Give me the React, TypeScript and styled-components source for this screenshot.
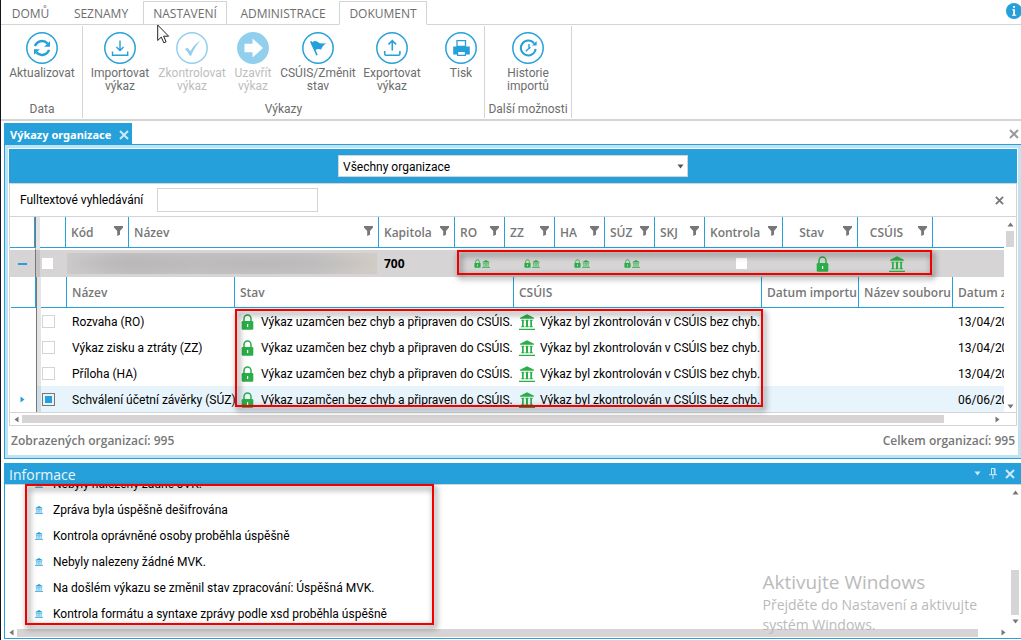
import React from "react";
import styled, { createGlobalStyle, css } from "styled-components";

const blue = "#26a0da";
const paleBlue = "#bfe3f3";
const line = "#d4d4d4";
const grey = "#777777";
const rowGrey = "#d6d4d5";
const green = "#2bae48";
const humanist = `"Open Sans", "Noto Sans", sans-serif`;

const GlobalStyle = createGlobalStyle`
  *, *::before, *::after { box-sizing: border-box; }
  body {
    margin: 0;
    background: #fff;
    color: #000;
    font-family: Roboto, "Open Sans", sans-serif;
    font-size: 12px;
    line-height: 16px;
    overflow: hidden;
  }
  button, input, select { font: inherit; color: inherit; margin: 0; }
  button { border: 0; padding: 0; background: none; cursor: pointer; }
  ul { list-style: none; margin: 0; padding: 0; }
  svg { display: block; flex: none; }
`;

/* ---------- shell ---------- */

const Shell = styled.div`
  position: relative;
  display: flex;
  flex-direction: column;
  height: 100vh;
  border-left: 1px solid #14141c;
  padding-bottom: 1px;
`;

const Workspace = styled.main`
  flex: 1;
  min-height: 0;
  display: flex;
  flex-direction: column;
  gap: 4px;
  padding-left: 3px;
`;

/* ---------- ribbon ---------- */

const Ribbon = styled.header`
  border-bottom: 2px solid ${line};
  color: #6d6d6d;
`;

const TabBar = styled.nav`
  display: flex;
  height: 25px;
  padding: 1px 0 0 1px;
  box-shadow: inset 0 -1px ${line};
`;

const RibbonTab = styled.button<{ $w: number; $state?: "hover" | "active" }>`
  width: ${(p) => p.$w}px;
  padding: 2px 0 0;
  border: 1px solid transparent;
  border-bottom-color: ${line};
  font-family: ${humanist};
  ${(p) => p.$state && css`border-color: ${line};`}
  ${(p) => p.$state === "active" && css`border-bottom-color: #fff;`}
`;

const InfoButton = styled.button`
  margin: 2px 0 0 auto;
  align-self: flex-start;
  width: 15px;
  overflow: hidden;
`;

const Groups = styled.div`
  display: flex;
  height: 94px;
  padding: 1px 0 1px 1px;
`;

const Group = styled.section<{ $w: number }>`
  display: flex;
  flex-direction: column;
  justify-content: space-between;
  width: ${(p) => p.$w}px;
  border-right: 1px solid ${line};
  padding: 6px 1px 1px;
`;

const GroupTools = styled.div`
  display: flex;
  justify-content: center;
`;

const GroupName = styled.h2`
  margin: 0;
  font-size: 12px;
  font-weight: 400;
  text-align: center;
  white-space: nowrap;
`;

const Tool = styled.button<{ $w: number; $end?: boolean }>`
  display: flex;
  flex-direction: column;
  align-items: center;
  gap: 3px;
  width: ${(p) => p.$w}px;
  line-height: 13px;
  white-space: pre;
  ${(p) => p.$end && css`margin-left: auto;`}
  &:disabled { color: #bdbdbd; }
  &:disabled svg { opacity: 0.5; }
`;

/* ---------- document panel ---------- */

const DocPanel = styled.section`
  flex: 1;
  min-height: 0;
  display: flex;
  flex-direction: column;
`;

const DocTabs = styled.div`
  display: flex;
  justify-content: space-between;
  align-items: center;
  padding: 2px 2px 0 0;
  color: #9a9a9a;
`;

const DocTab = styled.div`
  display: flex;
  align-items: center;
  gap: 8px;
  height: 21px;
  padding: 2px 3px 0 6px;
  background: ${blue};
  color: #fff;
  font-family: "Noto Sans", sans-serif;
  font-size: 11px;
  font-weight: 700;
  button { color: #cdeaf7; }
`;

const DocFrame = styled.div`
  flex: 1;
  min-height: 0;
  display: flex;
  flex-direction: column;
  border: 1px solid ${blue};
  border-right: 0;
`;

const DocInset = styled.div`
  flex: 1;
  min-height: 0;
  display: flex;
  flex-direction: column;
  border: 3px solid ${paleBlue};
  padding: 1px 1px 0;
`;

const Banner = styled.div`
  display: flex;
  justify-content: center;
  padding: 6px 0;
  background: ${blue};
`;

const Picker = styled.label`
  position: relative;
  width: 350px;
  color: #555;
  svg { position: absolute; right: 4px; top: 8px; pointer-events: none; }
`;

const PickerSelect = styled.select`
  display: block;
  appearance: none;
  width: 100%;
  height: 22px;
  padding: 1px 4px 0;
  border: 1px solid ${line};
  border-radius: 0;
  background: #fff;
  color: #000;
  outline: 0;
`;

const GridFrame = styled.div`
  position: relative;
  flex: 1;
  min-height: 0;
  display: flex;
  flex-direction: column;
  border: 1px solid ${line};
`;

const SearchRow = styled.div`
  display: flex;
  align-items: center;
  gap: 13px;
  padding: 4px 12px 4px 10px;
  border-bottom: 1px solid ${line};
  label { width: 124px; white-space: nowrap; }
  button { margin-left: auto; color: ${grey}; }
`;

const SearchInput = styled.input`
  width: 161px;
  height: 24px;
  border: 1px solid ${line};
  outline: 0;
`;

const GridBody = styled.div`
  flex: 1;
  min-height: 0;
  display: flex;
`;

const Viewport = styled.div`
  flex: 1;
  min-width: 0;
  overflow: hidden;
`;

const DataTable = styled.table<{ $inset?: boolean }>`
  table-layout: fixed;
  border-spacing: 0;
  width: ${(p) => (p.$inset ? "calc(100% - 1px)" : "100%")};
  margin-left: ${(p) => (p.$inset ? 1 : 0)}px;
  th, td { padding: 0; white-space: nowrap; overflow: hidden; }
  strong { font-family: ${humanist}; }
`;

const Th = styled.th`
  height: 31px;
  border-right: 1px solid ${blue};
  border-bottom: 1px solid ${blue};
  color: ${grey};
  font-family: ${humanist};
  font-weight: 600;
  text-align: left;
  &:last-child { border-right: 0; }
`;

const ThInner = styled.div<{ $center?: boolean }>`
  display: flex;
  align-items: center;
  padding: 0 5px;
  span {
    flex: 1;
    padding-top: 2px;
    ${(p) => p.$center && css`text-align: center; padding-right: 8px;`}
  }
  button { margin-bottom: 2px; }
`;

const GutterTh = styled.th`
  border-left: 1px solid ${grey};
  background: #e4e4e4;
`;

const GutterTd = styled.td`
  border-left: 1px solid ${grey};
  background: #e4e4e4;
`;

const OrgRow = styled.tr`
  td {
    height: 29px;
    border-top: 2px solid #fff;
    background: ${rowGrey};
  }
  ${GutterTd} { background: #c4c2c3; border-top-color: #e4e4e4; }
`;

const DetailRow = styled.tr<{ $selected?: boolean }>`
  td { height: 26px; padding-top: 1px; }
  ${(p) => p.$selected && css`
    td { background: #e8f4fb; }
    ${GutterTd} { background: #cfdde4; }
    td:first-child { background: #fff; }
  `}
`;

const Cell = styled.div<{ $pad?: number; $gap?: number; $center?: boolean }>`
  display: flex;
  align-items: center;
  gap: ${(p) => p.$gap ?? 0}px;
  padding-left: ${(p) => p.$pad ?? 5}px;
  ${(p) => p.$center && css`justify-content: center;`}
`;

const Marker = styled(Cell)`
  color: ${blue};
`;

const Redacted = styled.div`
  height: 21px;
  margin: 0 2px 0 1px;
  background:
    radial-gradient(ellipse 70px 12px at 22% 50%, #b9b7b8, transparent),
    radial-gradient(ellipse 120px 12px at 62% 50%, #bab8b9, transparent),
    linear-gradient(90deg, #cbc9ca, #c1bfc0 20%, #c4c2c3 80%, #d2ccc6);
`;

const Check = styled.input<{ $bare?: boolean }>`
  appearance: none;
  display: grid;
  width: ${(p) => (p.$bare ? 11 : 13)}px;
  height: ${(p) => (p.$bare ? 11 : 13)}px;
  margin: 0;
  background: #fff;
  border: ${(p) => (p.$bare ? "0" : `1px solid ${line}`)};
  &:checked {
    border-color: ${grey};
    background: ${blue} content-box;
    padding: 2px;
  }
`;

const Footer = styled.footer`
  display: flex;
  justify-content: space-between;
  height: 29px;
  padding: 7px 2px 0;
  color: ${grey};
  font-family: ${humanist};
  font-weight: 600;
`;

/* ---------- scroll bars ---------- */

const VBar = styled.div`
  display: flex;
  flex-direction: column;
  align-items: center;
  justify-content: space-between;
  width: 12px;
  padding: 4px 0 2px;
  color: ${grey};
`;

const VTrack = styled.div<{ $end?: boolean }>`
  flex: 1;
  display: flex;
  flex-direction: column;
  justify-content: ${(p) => (p.$end ? "flex-end" : "flex-start")};
  padding: 3px 0;
`;

const VThumb = styled.div<{ $h: number }>`
  width: 8px;
  height: ${(p) => p.$h}px;
  background: ${rowGrey};
`;

const HBar = styled.div<{ $ruled?: boolean }>`
  display: flex;
  align-items: center;
  gap: 2px;
  height: ${(p) => (p.$ruled ? 13 : 11)}px;
  padding: 0 ${(p) => (p.$ruled ? 15 : 14)}px 0 3px;
  color: ${grey};
  ${(p) => p.$ruled && css`border-top: 1px solid ${line};`}
`;

const HTrack = styled.div`
  flex: 1;
`;

const HThumb = styled.div<{ $share: number }>`
  width: ${(p) => p.$share}%;
  height: 8px;
  background: ${rowGrey};
`;

/* ---------- information panel ---------- */

const InfoPanel = styled.section`
  position: relative;
  display: flex;
  flex-direction: column;
`;

const InfoHead = styled.div`
  display: flex;
  align-items: center;
  gap: 8px;
  height: 21px;
  padding: 0 6px 0 5px;
  background: ${blue};
  color: #cdeaf7;
`;

const InfoTitle = styled.h2`
  flex: 1;
  margin: 0;
  padding-top: 2px;
  color: #eaf7fd;
  font-family: ${humanist};
  font-size: 14px;
  line-height: 20px;
  font-weight: 400;
`;

const InfoBody = styled.div`
  border: solid ${blue};
  border-width: 0 0 1px 1px;
  box-shadow: inset 0 1px ${line};
  padding-top: 1px;
`;

const InfoScroll = styled.div`
  display: flex;
  height: 142px;
`;

const Messages = styled.ul`
  flex: 1;
  display: flex;
  flex-direction: column;
  justify-content: flex-end;
  overflow: hidden;
`;

const Message = styled.li`
  display: flex;
  flex: none;
  align-items: center;
  gap: 10px;
  height: 26px;
  padding-left: 30px;
`;

/* ---------- overlays ---------- */

const Mark = styled.div<{ $x: number; $y: number; $w: number; $h: number }>`
  position: absolute;
  left: ${(p) => p.$x}px;
  top: ${(p) => p.$y}px;
  width: ${(p) => p.$w}px;
  height: ${(p) => p.$h}px;
  border: 2px solid #f20000;
  filter: drop-shadow(2px 3px 3px rgba(0, 0, 0, 0.7));
  pointer-events: none;
`;

const Watermark = styled.div`
  position: absolute;
  right: 44px;
  bottom: 5px;
  color: #bababa;
  font-family: ${humanist};
  font-size: 14px;
  line-height: 20px;
  pointer-events: none;
`;

const WatermarkTitle = styled.div`
  font-size: 19px;
  line-height: 26px;
`;

const Pointer = styled.svg`
  position: absolute;
  left: 156px;
  top: 24px;
  pointer-events: none;
`;

/* ---------- drawings ---------- */

const Ring = ({ children, solid }: { children: React.ReactNode; solid?: boolean }) => (
  <svg width="32" height="32" viewBox="0 0 32 32" fill="none" stroke={blue}>
    <circle cx="16" cy="16" r="15.2" strokeWidth="1.5" fill={solid ? blue : "none"} />
    {children}
  </svg>
);

const RefreshIcon = () => (
  <Ring>
    <path d="M9 14.2a7.4 7.4 0 0 1 12.6-2.6M23 17.8a7.4 7.4 0 0 1-12.6 2.6" strokeWidth="2.4" />
    <path d="M24 9.200v5.600h-5.800zM8 22.800v-5.600h5.800z" fill={blue} stroke="none" />
  </Ring>
);

const ImportIcon = () => (
  <Ring>
    <path d="M16 8.5v10M12.4 15l3.6 3.6 3.6-3.6M8.5 19.5v3.8h15.2v-3.8" strokeWidth="1.4" />
  </Ring>
);

const ExportIcon = () => (
  <Ring>
    <path d="M16.3 18.5v-9.7M12.5 12.4l3.8-3.8 3.8 3.8M8.7 19v2.8q0 1.4 1.4 1.4h12.4q1.4 0 1.4-1.4V19" strokeWidth="1.6" />
  </Ring>
);

const CheckIcon = () => (
  <Ring>
    <path d="M9 17l2.5-1.2 3 3.4q3.5-6.7 10.2-10.6-5.9 6-9.7 15.2h-1.2q-2-4.3-4.8-6.8z" fill={blue} stroke="none" />
  </Ring>
);

const ArrowIcon = () => (
  <Ring solid>
    <path d="M7.5 11.8h8V6.5L26 16 15.5 25.5v-5.3h-8z" fill="#fff" stroke="none" />
  </Ring>
);

const FlagIcon = () => (
  <Ring>
    <path d="M8 9.8l1.6-.9.9 1.3q2.4-2.2 5.2-.2 2.6 2.3 8.8 1.3-4.2 2.3-5.2 6.2-3.8-1.300-5.700.500l2.200 5-1.500.6z" fill={blue} stroke="none" />
  </Ring>
);

const PrintIcon = () => (
  <Ring>
    <path d="M8.2 14.5h16.6v8H8.2z" fill={blue} stroke="none" />
    <path d="M12 14.5V8.7h8.5v5.8z" fill="#fff" strokeWidth="1.3" />
    <path d="M12.6 19.5h7.8v3.8h-7.800z" fill="#fff" strokeWidth="1.2" />
  </Ring>
);

const HistoryIcon = () => (
  <Ring>
    <path d="M22 11.300a7.400 7.400 0 1 0 1.600 5.500" strokeWidth="2" />
    <path d="M24.600 9v4.600H20z" fill={blue} stroke="none" />
    <path d="M17 12v4.200l-3.200 3M16.800 16.600l1.600-1.400" strokeWidth="1.400" />
  </Ring>
);

const Lock = ({ w = 13, h = 16 }: { w?: number; h?: number }) => (
  <svg width={w} height={h} viewBox="0 0 13 16">
    <path d="M3 8V4.500a3.500 3.500 0 0 1 7 0V8" fill="none" stroke={green} strokeWidth="1.500" />
    <rect x="0.700" y="7" width="11.600" height="8.700" rx="1.200" fill={green} />
    <path d="M6 10h1.200v3H6z" fill="#fff" />
  </svg>
);

const Bank = ({ w = 16, h = 16, color = green }: { w?: number; h?: number; color?: string }) => (
  <svg width={w} height={h} viewBox="0 0 16 16" fill={color}>
    <path d="M8 .2l7 3.600v1H1v-1zM2.300 5.800h3v1h-.6v5.400h.8v1H2.200v-1H3V6.800h-.7zM6.500 5.800h3v1H9v5.400h.6v1H6.400v-1H7V6.800h-.5zM10.700 5.800h3v1H13v5.400h.8v1h-3.300v-1h.8V6.800h-.6zM0 14.700h16V16H0z" />
  </svg>
);

const Cross = ({ size = 10, w = 2 }: { size?: number; w?: number }) => (
  <svg width={size} height={size} viewBox="0 0 10 10" stroke="currentColor" strokeWidth={w}>
    <path d="M1 1l8 8M9 1l-8 8" />
  </svg>
);

const Funnel = () => (
  <svg width="9" height="10" viewBox="0 0 9 10" fill={grey}>
    <path d="M0 0h9v1.500L6 5v3.800L3.200 10V5L0 1.500z" />
  </svg>
);

const turns = { up: 180, down: 0, left: 90, right: 270 };

const Triangle = ({ to }: { to: keyof typeof turns }) => (
  <svg width="7" height="7" viewBox="0 0 7 7" fill="currentColor">
    <path d="M.5 1.500h6L3.500 5.500z" transform={`rotate(${turns[to]} 3.500 3.500)`} />
  </svg>
);

const PinIcon = () => (
  <svg width="8" height="11" viewBox="0 0 8 11" fill="none" stroke="currentColor">
    <path d="M2.500 6.500v-6h3.500v6M5.300.5v6M0 6.700h8M4 7v4" />
  </svg>
);

/* ---------- data ---------- */

type ToolDef = { label: string; icon: () => React.JSX.Element; w: number; off?: boolean; end?: boolean };

const groups: { name: string; w: number; tools: ToolDef[] }[] = [
  { name: "Data", w: 81, tools: [{ label: "Aktualizovat", icon: RefreshIcon, w: 78 }] },
  {
    name: "Výkazy",
    w: 402,
    tools: [
      { label: "Importovat\nvýkaz", icon: ImportIcon, w: 72 },
      { label: "Zkontrolovat\nvýkaz", icon: CheckIcon, w: 72, off: true },
      { label: "Uzavřít\nvýkaz", icon: ArrowIcon, w: 50, off: true },
      { label: "CSÚIS/Změnit\nstav", icon: FlagIcon, w: 80 },
      { label: "Exportovat\nvýkaz", icon: ExportIcon, w: 68 },
      { label: "Tisk", icon: PrintIcon, w: 44, end: true },
    ],
  },
  { name: "Další možnosti", w: 87, tools: [{ label: "Historie\nimportů", icon: HistoryIcon, w: 80 }] },
];

const mainWidths = [25, 5, 26, 63, 250, 76, 50, 50, 50, 50, 50, 78, 75, 75];
const detailWidths = [25, 5, 26, 168, 279, 248, 97, 94];

const mainColumns = ["Kód", "Název", "Kapitola", "RO", "ZZ", "HA", "SÚZ", "SKJ", "Kontrola", "Stav", "CSÚIS"];
const detailColumns = ["Název", "Stav", "CSÚIS", "Datum importu", "Název souboru", "Datum zpracování"];

const details = [
  { name: "Rozvaha (RO)", date: "13/04/2017" },
  { name: "Výkaz zisku a ztráty (ZZ)", date: "13/04/2017" },
  { name: "Příloha (HA)", date: "13/04/2017" },
  { name: "Schválení účetní závěrky (SÚZ)", date: "06/06/2017", selected: true },
];

const messages = [
  "Nebyly nalezeny žádné JVK.",
  "Zpráva byla úspěšně dešifrována",
  "Kontrola oprávněné osoby proběhla úspěšně",
  "Nebyly nalezeny žádné MVK.",
  "Na došlém výkazu se změnil stav zpracování: Úspěšná MVK.",
  "Kontrola formátu a syntaxe zprávy podle xsd proběhla úspěšně",
];

const Columns = ({ widths }: { widths: number[] }) => (
  <colgroup>
    {widths.map((w, i) => <col key={i} width={w} />)}
    <col />
  </colgroup>
);

const VScroll = ({ thumb, end }: { thumb: number; end?: boolean }) => (
  <VBar>
    <button aria-label="Nahoru"><Triangle to="up" /></button>
    <VTrack $end={end}><VThumb $h={thumb} /></VTrack>
    <button aria-label="Dolů"><Triangle to="down" /></button>
  </VBar>
);

const HScroll = ({ share, ruled }: { share: number; ruled?: boolean }) => (
  <HBar $ruled={ruled}>
    <button aria-label="Vlevo"><Triangle to="left" /></button>
    <HTrack><HThumb $share={share} /></HTrack>
    <button aria-label="Vpravo"><Triangle to="right" /></button>
  </HBar>
);

const DetailTable = () => (
  <DataTable $inset>
    <Columns widths={detailWidths} />
    <thead>
      <tr>
        <Th />
        <GutterTh />
        <Th />
        {detailColumns.map((c) => <Th key={c}><ThInner><span>{c}</span></ThInner></Th>)}
      </tr>
    </thead>
    <tbody>
      {details.map((d) => (
        <DetailRow key={d.name} $selected={d.selected}>
          <td>{d.selected && <Marker $pad={8}><Triangle to="right" /></Marker>}</td>
          <GutterTd />
          <td><Cell $pad={1}><Check type="checkbox" aria-label={d.name} defaultChecked={!!d.selected} /></Cell></td>
          <td><Cell>{d.name}</Cell></td>
          <td><Cell $pad={6} $gap={7}><Lock />Výkaz uzamčen bez chyb a připraven do CSÚIS.</Cell></td>
          <td><Cell $gap={5}><Bank />Výkaz byl zkontrolován v CSÚIS bez chyb.</Cell></td>
          <td />
          <td />
          <td><Cell>{d.date}</Cell></td>
        </DetailRow>
      ))}
    </tbody>
  </DataTable>
);

export default function App() {
  return (
    <Shell>
      <GlobalStyle />
      <Ribbon>
        <TabBar>
          <RibbonTab $w={57}>DOMŮ</RibbonTab>
          <RibbonTab $w={84}>SEZNAMY</RibbonTab>
          <RibbonTab $w={84} $state="hover">NASTAVENÍ</RibbonTab>
          <RibbonTab $w={112}>ADMINISTRACE</RibbonTab>
          <RibbonTab $w={88} $state="active">DOKUMENT</RibbonTab>
          <InfoButton aria-label="Informace">
            <svg width="16" height="16" viewBox="0 0 16 16">
              <circle cx="8" cy="8" r="8" fill={blue} />
              <path d="M7 3h2v1.800H7zM6.200 6.300H9v5.500h1.200v.9H6v-.9h1.200V7.200h-1z" fill="#fff" />
            </svg>
          </InfoButton>
        </TabBar>
        <Groups>
          {groups.map((g) => (
            <Group key={g.name} $w={g.w}>
              <GroupTools>
                {g.tools.map((t) => (
                  <Tool key={t.label} $w={t.w} $end={t.end} disabled={t.off}>
                    <t.icon />
                    {t.label}
                  </Tool>
                ))}
              </GroupTools>
              <GroupName>{g.name}</GroupName>
            </Group>
          ))}
        </Groups>
      </Ribbon>

      <Workspace>
        <DocPanel>
          <DocTabs>
            <DocTab>
              Výkazy organizace
              <button aria-label="Zavřít záložku"><Cross /></button>
            </DocTab>
            <button aria-label="Zavřít"><Cross /></button>
          </DocTabs>
          <DocFrame>
            <DocInset>
              <Banner>
                <Picker>
                  <PickerSelect aria-label="Organizace">
                    <option>Všechny organizace</option>
                  </PickerSelect>
                  <Triangle to="down" />
                </Picker>
              </Banner>
              <GridFrame>
                <SearchRow>
                  <label htmlFor="fulltext">Fulltextové vyhledávání</label>
                  <SearchInput id="fulltext" type="text" />
                  <button aria-label="Zavřít vyhledávání"><Cross size={9} /></button>
                </SearchRow>
                <GridBody>
                  <Viewport>
                    <DataTable>
                      <Columns widths={mainWidths} />
                      <thead>
                        <tr>
                          <Th />
                          <GutterTh />
                          <Th />
                          {mainColumns.map((c) => (
                            <Th key={c}>
                              <ThInner $center={c === "Stav" || c === "CSÚIS"}>
                                <span>{c}</span>
                                <button aria-label={`Filtr ${c}`}><Funnel /></button>
                              </ThInner>
                            </Th>
                          ))}
                          <Th />
                        </tr>
                      </thead>
                      <tbody>
                        <OrgRow>
                          <td>
                            <Cell $pad={8}>
                              <button aria-label="Sbalit">
                                <svg width="9" height="2" viewBox="0 0 9 2"><path d="M0 0h9v2H0z" fill={blue} /></svg>
                              </button>
                            </Cell>
                          </td>
                          <GutterTd />
                          <td><Cell $pad={2}><Check $bare type="checkbox" aria-label="Vybrat organizaci" /></Cell></td>
                          <td colSpan={2}><Redacted /></td>
                          <td><Cell><strong>700</strong></Cell></td>
                          {["RO", "ZZ", "HA", "SÚZ"].map((k) => (
                            <td key={k}><Cell $center $gap={1} $pad={4}><Lock w={7} h={9} /><Bank w={8} h={8} /></Cell></td>
                          ))}
                          <td />
                          <td><Cell $pad={31}><Check $bare type="checkbox" aria-label="Kontrola" /></Cell></td>
                          <td><Cell $center $pad={3}><Lock /></Cell></td>
                          <td><Cell $center $pad={3}><Bank /></Cell></td>
                          <td />
                        </OrgRow>
                        <tr>
                          <td colSpan={15}><DetailTable /></td>
                        </tr>
                      </tbody>
                    </DataTable>
                  </Viewport>
                  <VScroll thumb={16} />
                </GridBody>
                <HScroll share={95} ruled />
                <Mark $x={447} $y={66} $w={475} $h={25} />
                <Mark $x={225} $y={125} $w={528} $h={98} />
              </GridFrame>
              <Footer>
                <span>Zobrazených organizací: 995</span>
                <span>Celkem organizací: 995</span>
              </Footer>
            </DocInset>
          </DocFrame>
        </DocPanel>

        <InfoPanel>
          <InfoHead>
            <InfoTitle>Informace</InfoTitle>
            <button aria-label="Nabídka"><Triangle to="down" /></button>
            <button aria-label="Připnout"><PinIcon /></button>
            <button aria-label="Zavřít panel"><Cross /></button>
          </InfoHead>
          <InfoBody>
            <InfoScroll>
              <Messages>
                {messages.map((m) => (
                  <Message key={m}><Bank w={8} h={8} color={blue} />{m}</Message>
                ))}
              </Messages>
              <VScroll thumb={45} end />
            </InfoScroll>
            <HScroll share={98} />
          </InfoBody>
          <Mark $x={21} $y={21} $w={409} $h={141} />
        </InfoPanel>
      </Workspace>

      <Watermark>
        <WatermarkTitle>Aktivujte Windows</WatermarkTitle>
        Přejděte do Nastavení a aktivujte
        <br />
        systém Windows.
      </Watermark>

      <Pointer width="13" height="20" viewBox="0 0 13 20">
        <path d="M.7 1v15.500l3.600-3.400 2.500 5.700 2.300-1-2.500-5.600h5z" fill="#fff" stroke="#222" />
      </Pointer>
    </Shell>
  );
}
